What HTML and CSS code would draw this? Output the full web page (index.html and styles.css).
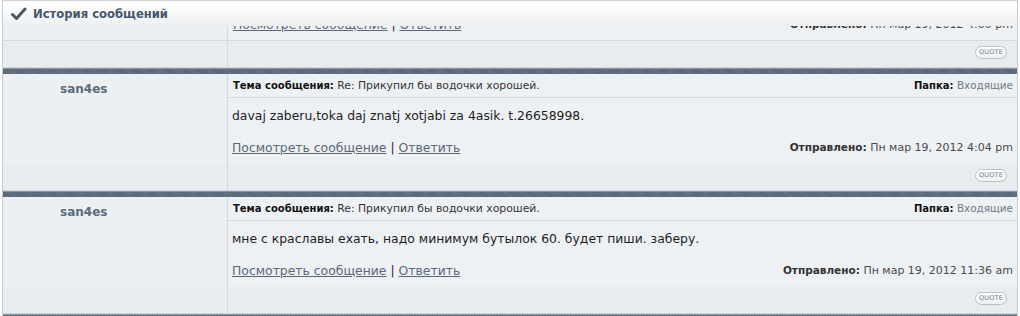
FILE: index.html
```html
<!DOCTYPE html>
<html lang="ru">
<head>
<meta charset="utf-8">
<title>История сообщений</title>
<link rel="stylesheet" href="styles.css">
</head>
<body>
<div class="panel">
  <div class="header">
    <svg class="check" width="16" height="14" viewBox="0 0 16 14" aria-hidden="true">
      <path d="M1.5 7.5 L5.5 11.5 L14 2" fill="none" stroke="#4a5866" stroke-width="3" stroke-linecap="round" stroke-linejoin="round"/>
    </svg>
    <span class="title">История сообщений</span>
  </div>

  <div class="row partial">
    <div class="left"></div>
    <div class="right">
      <div class="foot">
        <span class="links"><a href="#">Посмотреть сообщение</a> <span class="pipe">|</span> <a href="#">Ответить</a></span>
        <span class="sent"><b>Отправлено:</b> Пн мар 19, 2012 4:00 pm</span>
      </div>
    </div>
  </div>
  <div class="row quoterow">
    <div class="left"></div>
    <div class="right"><span class="quote">QUOTE</span></div>
  </div>

  <div class="sep"></div>
  <div class="row main">
    <div class="left"><span class="name">san4es</span></div>
    <div class="right">
      <div class="subject">
        <span><b>Тема сообщения:</b> Re: Прикупил бы водочки хорошей.</span>
        <span><b>Папка:</b> <span class="folder">Входящие</span></span>
      </div>
      <div class="body">
        <div class="text">davaj zaberu,toka daj znatj xotjabi za 4asik. t.26658998.</div>
        <div class="foot">
          <span class="links"><a href="#">Посмотреть сообщение</a> <span class="pipe">|</span> <a href="#">Ответить</a></span>
          <span class="sent"><b>Отправлено:</b> Пн мар 19, 2012 4:04 pm</span>
        </div>
      </div>
    </div>
  </div>
  <div class="row quoterow">
    <div class="left"></div>
    <div class="right"><span class="quote">QUOTE</span></div>
  </div>

  <div class="sep"></div>
  <div class="row main">
    <div class="left"><span class="name">san4es</span></div>
    <div class="right">
      <div class="subject">
        <span><b>Тема сообщения:</b> Re: Прикупил бы водочки хорошей.</span>
        <span><b>Папка:</b> <span class="folder">Входящие</span></span>
      </div>
      <div class="body">
        <div class="text">мне с краславы ехать, надо минимум бутылок 60. будет пиши. заберу.</div>
        <div class="foot">
          <span class="links"><a href="#">Посмотреть сообщение</a> <span class="pipe">|</span> <a href="#">Ответить</a></span>
          <span class="sent"><b>Отправлено:</b> Пн мар 19, 2012 11:36 am</span>
        </div>
      </div>
    </div>
  </div>
  <div class="row quoterow">
    <div class="left"></div>
    <div class="right"><span class="quote">QUOTE</span></div>
  </div>
  <div class="sep"></div>
</div>
</body>
</html>
```

FILE: styles.css
```css
html, body {
  margin: 0;
  padding: 0;
  background: #ffffff;
}
body {
  font-family: "DejaVu Sans", Verdana, sans-serif;
  color: #222;
  overflow: hidden;
}
.panel {
  margin-left: 2px;
  width: 1014px;
  border-left: 1px solid #c4cbd2;
  border-right: 1px solid #c4cbd2;
  background: #eef1f4;
}
.header {
  height: 25px;
  border-top: 1px solid #cdd2d7;
  background: linear-gradient(180deg, #ffffff 0%, #f6f7f8 60%, #eceef0 100%);
  display: flex;
  align-items: center;
  padding-left: 8px;
  gap: 6px;
}
.check { display: block; }
.title {
  font-weight: bold;
  font-size: 11.6px;
  color: #46566a;
}
.row {
  display: flex;
}
.left {
  width: 224px;
  flex: none;
  border-right: 1px solid #d3d8dd;
  background: #edf0f3;
}
.right {
  flex: 1;
  min-width: 0;
  display: flex;
  flex-direction: column;
}
.partial {
  height: 14px;
  border-bottom: 1px solid #d3d8dd;
}
.partial .right {
  overflow: hidden;
  justify-content: flex-end;
  padding: 0 4px 8px 5px;
}
.partial .foot { flex: none; }
.quoterow {
  height: 26px;
  background: #e9ecef;
  border-bottom: 1px solid #d3d8dd;
}
.quoterow .left { background: #e9ecef; }
.quoterow .right {
  flex-direction: row;
  justify-content: flex-end;
  align-items: flex-start;
  padding: 5px 10px 0 0;
}
.quote {
  font-family: "DejaVu Sans", Verdana, sans-serif;
  font-size: 6.5px;
  letter-spacing: 0.2px;
  color: #6f7a85;
  border: 1px solid #b9c1c9;
  border-radius: 7px;
  background: linear-gradient(180deg, #ffffff, #eef0f2);
  height: 11px;
  line-height: 11px;
  padding: 0 3px;
}
.sep {
  height: 5px;
  border-top: 1px solid #8794a1;
  background: repeating-linear-gradient(45deg, #566676 0 1px, #667585 1px 2px);
}
.main {
  height: 90px;
}
.name {
  display: block;
  padding: 8px 0 0 57px;
  font-weight: bold;
  font-size: 12px;
  line-height: 14px;
  color: #5b6b7c;
}
.subject {
  height: 23px;
  border-bottom: 1px solid #d3d8dd;
  display: flex;
  justify-content: space-between;
  align-items: center;
  padding: 0 4px 0 5px;
  font-size: 10.8px;
  color: #333;
}
.subject b { color: #111; font-size: 10px; }
.folder { color: #6b7a89; font-size: 10.4px; }
.body {
  flex: 1;
  display: flex;
  flex-direction: column;
  justify-content: space-between;
  padding: 10px 4px 9px 4px;
}
.text {
  font-size: 12.4px;
  line-height: 15px;
  color: #1e1e1e;
}
.foot {
  display: flex;
  justify-content: space-between;
  align-items: center;
  line-height: 15px;
}
.links {
  font-size: 12.4px;
  color: #4a2a2a;
}
.links a {
  color: #5a6878;
  text-decoration: underline;
}
.pipe { color: #3a2020; }
.sent {
  font-size: 11px;
  color: #4a4a4a;
}
.sent b { color: #333; font-size: 10.5px; }
```
